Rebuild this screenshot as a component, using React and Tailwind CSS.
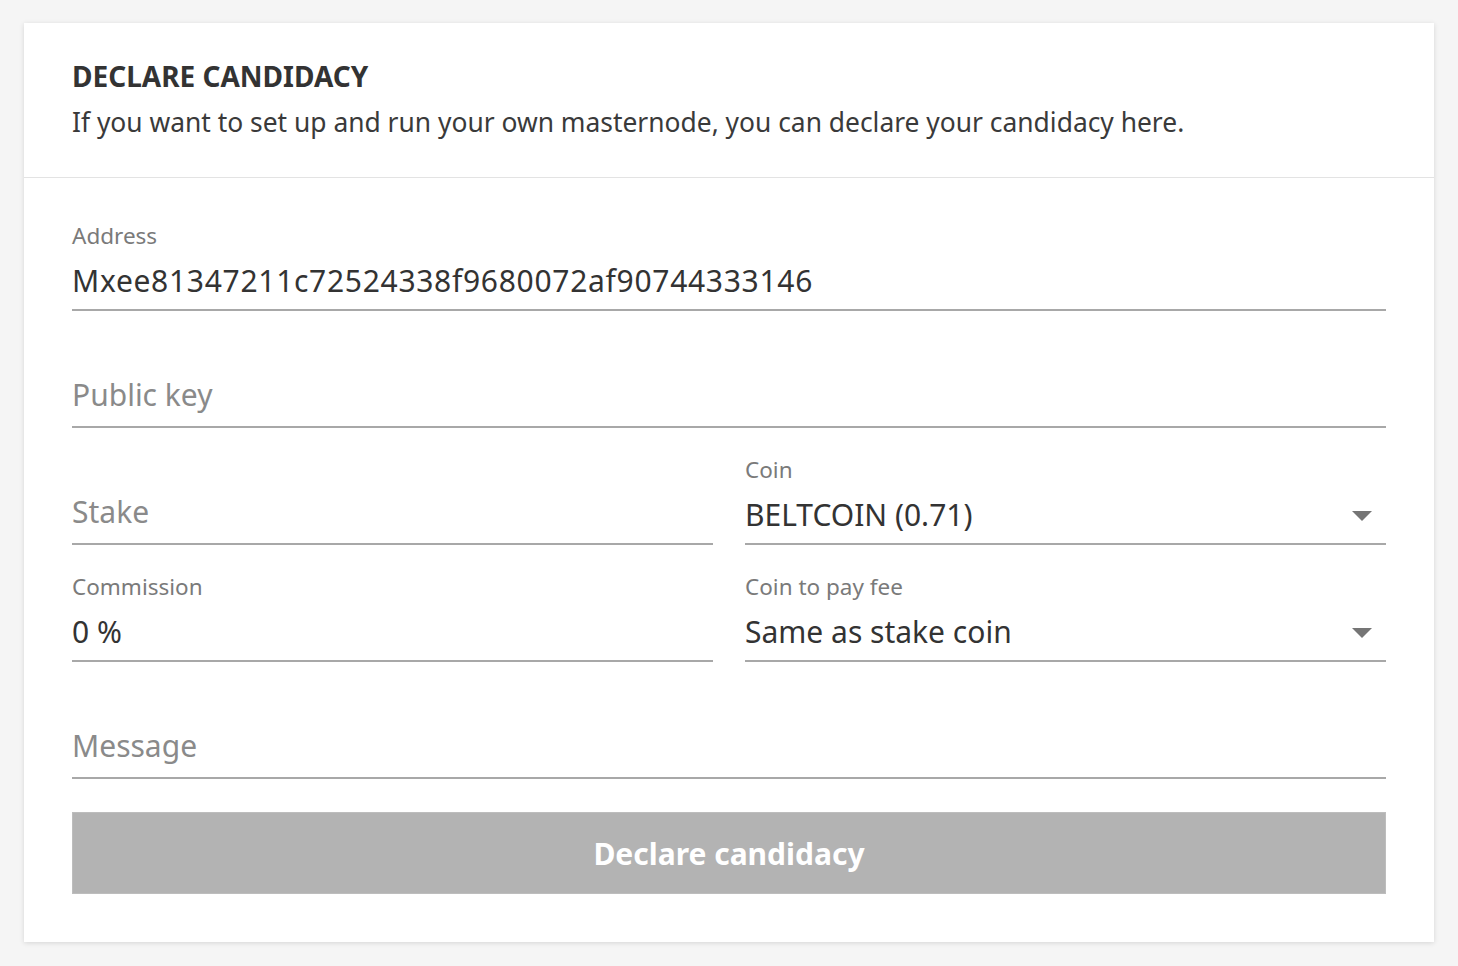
import React from 'react';

const Field = ({ label, value, placeholder, select, wide }) => {
  return (
    <div className="h-[117px] flex flex-col justify-end">
      {label && (
        <div className="text-[22.5px] leading-[28px] text-[#7a7a7a] mb-[9px]">{label}</div>
      )}
      <div className={`relative flex items-center border-b-2 border-[#a8a8a8] ${value ? 'pb-[6px]' : 'pb-[9px]'}`}>
        <input
          readOnly
          value={value || ''}
          placeholder={placeholder}
          className={`w-full bg-transparent outline-none text-[30px] leading-[44px] h-[44px] text-[#333] placeholder:text-[#8a8a8a] ${wide ? 'tracking-[0.7px]' : ''}`}
        />
        {select && (
          <svg className="absolute right-[14px] top-[18px] w-[20px] h-[10px]" viewBox="0 0 20 10">
            <path d="M0 0h20L10 10z" fill="#757575" />
          </svg>
        )}
      </div>
    </div>
  );
};

export default function App() {
  return (
    <div className="min-h-screen bg-[#f5f5f5] px-6 pt-[23px] pb-6 font-['Noto_Sans',sans-serif]">
      <div className="bg-white shadow-[0_1px_5px_rgba(0,0,0,0.13)]">
        <div className="px-12 pt-[37px] pb-[35px] border-b border-[#e3e3e3]">
          <h1 className="text-[28px] leading-[32px] font-bold text-[#333]">DECLARE CANDIDACY</h1>
          <p className="mt-[10px] text-[26.4px] leading-[40px] text-[#3a3a3a]">
            If you want to set up and run your own masternode, you can declare your candidacy here.
          </p>
        </div>
        <div className="px-12 pt-[16px] pb-12">
          <Field label="Address" value="Mxee81347211c72524338f9680072af90744333146" wide />
          <Field placeholder="Public key" />
          <div className="grid grid-cols-2 gap-x-8">
            <Field placeholder="Stake" />
            <Field label="Coin" value="BELTCOIN (0.71)" select />
          </div>
          <div className="grid grid-cols-2 gap-x-8">
            <Field label="Commission" value="0 %" />
            <Field label="Coin to pay fee" value="Same as stake coin" select />
          </div>
          <Field placeholder="Message" />
          <button className="mt-[33px] w-full h-[82px] bg-[#b3b3b3] border border-[#bdbdbd] text-white text-[30px] font-bold">
            Declare candidacy
          </button>
        </div>
      </div>
    </div>
  );
}
